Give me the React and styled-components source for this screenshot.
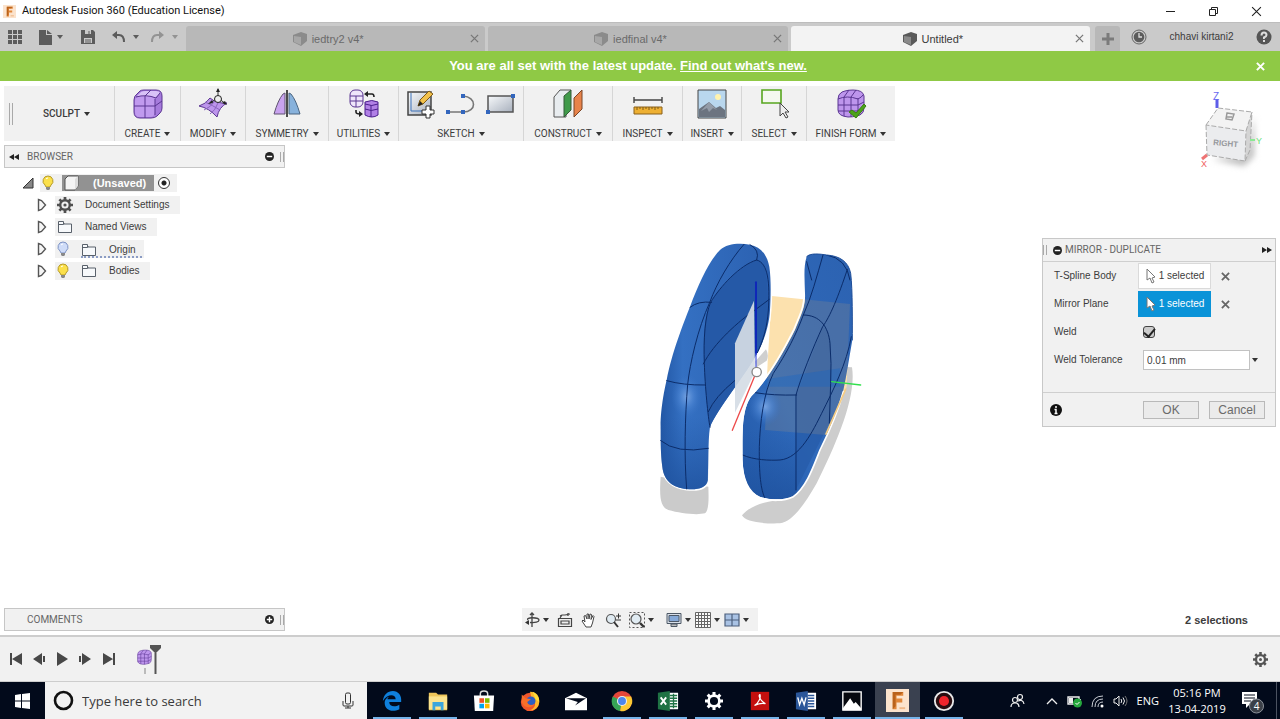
import React from "react";
import styled, { createGlobalStyle } from "styled-components";

const sans = '"Liberation Sans", Arial, sans-serif';
const narrow = 'Roboto, "Liberation Sans", sans-serif';
const system = '"Open Sans", "Noto Sans", sans-serif';

const GlobalStyle = createGlobalStyle`
  * { box-sizing: border-box; }
  body { margin: 0; background: #fff; color: #3c3c3c; font: 10px/14px ${sans}; }
  button, input { font: inherit; color: inherit; margin: 0; }
  svg { display: block; flex: none; }
`;

const Page = styled.div`
  display: flex;
  flex-direction: column;
  min-height: 100vh;
`;

const PlainButton = styled.button`
  display: flex;
  align-items: center;
  justify-content: center;
  padding: 0;
  border: 0;
  background: none;
`;

const Caret = styled.span`
  flex: none;
  width: 0;
  height: 0;
  border: 3px solid transparent;
  border-top: 4px solid ${(p) => p.$color || "#333"};
  border-bottom: 0;
`;

/* ---------- title bar ---------- */
const TitleBar = styled.header`
  display: flex;
  align-items: center;
  height: 22px;
  padding: 0 5px 0 3px;
  gap: 6px;
  font: 11px/16px ${narrow};
  color: #111;
`;
const AppTitle = styled.h1`
  flex: 1;
  margin: 0;
  font: inherit;
`;
const WindowButton = styled(PlainButton)`
  width: 37px;
  height: 22px;
`;

/* ---------- document tabs ---------- */
const TabBar = styled.div`
  display: flex;
  align-items: flex-end;
  height: 29px;
  background: #cacaca;
  border-top: 1px solid #bdbdbd;
`;
const QuickTools = styled.div`
  display: grid;
  grid-template-columns: 31px 42px 31px 39px 1fr;
  align-items: center;
  justify-items: start;
  align-self: stretch;
  width: 186px;
  padding-left: 8px;
`;
const QuickButton = styled(PlainButton)`
  gap: ${(p) => p.$gap || 0}px;
`;
const Tabs = styled.nav`
  display: flex;
  flex: 1;
  gap: 3px;
`;
const Tab = styled.div`
  display: flex;
  align-items: center;
  flex: 1;
  height: 25px;
  padding: 0 6px;
  border-radius: 3px 3px 0 0;
  background: ${(p) => (p.$active ? "#f3f3f3" : "#b8b8b8")};
  color: ${(p) => (p.$active ? "#3a3a3a" : "#6a6a6a")};
  font-size: 11px;
`;
const TabName = styled(PlainButton)`
  flex: 1;
  gap: 4px;
  padding-right: 7px;
`;
const NewTab = styled(PlainButton)`
  width: 25px;
  height: 25px;
  margin-left: 5px;
  background: #b8b8b8;
  border-radius: 3px 3px 0 0;
`;
const Account = styled.div`
  display: flex;
  align-items: center;
  justify-content: space-between;
  align-self: stretch;
  width: 160px;
  padding: 0 8px 0 11px;
`;

/* ---------- banner ---------- */
const Banner = styled.div`
  display: flex;
  align-items: center;
  height: 30px;
  padding: 0 15px 0 24px;
  background: #8fc945;
  color: #fff;
  font: bold 13px/16px ${sans};
`;
const BannerText = styled.p`
  flex: 1;
  margin: 0;
  padding-right: 24px;
  text-align: center;
`;
const BannerLink = styled.a`
  color: inherit;
`;

/* ---------- workspace ---------- */
const Workspace = styled.main`
  position: relative;
  display: flex;
  flex-direction: column;
  justify-content: space-between;
  flex: 1;
  padding: 5px 4px 4px;
`;
const Canvas = styled.svg`
  position: absolute;
  inset: 0;
  width: 100%;
  height: 100%;
`;
const Upper = styled.div`
  position: relative;
  display: flex;
  justify-content: space-between;
  align-items: flex-start;
`;
const LeftSide = styled.div`
  display: flex;
  flex-direction: column;
  align-items: flex-start;
  gap: 4px;
`;
const RightSide = styled.div`
  display: flex;
  flex-direction: column;
  align-items: flex-end;
  gap: 60px;
`;
const Ribbon = styled.div`
  display: flex;
  height: 55px;
  background: #f1f1f1;
  font: 10px/14px ${narrow};
`;
const Grip = styled.span`
  width: 4px;
  height: ${(p) => p.$h}px;
  border: solid #a9a9a9;
  border-width: 0 1px;
`;
const ModeCell = styled.div`
  display: flex;
  align-items: center;
  gap: 30px;
  width: 110px;
  padding-left: 5px;
`;
const MenuLabel = styled(PlainButton)`
  gap: 4px;
  font-weight: ${(p) => (p.$strong ? 500 : 400)};
  white-space: nowrap;
`;
const RibbonGroup = styled.section`
  display: flex;
  flex-direction: column;
  align-items: center;
  gap: 7px;
  width: ${(p) => p.$w}px;
  padding-top: 2px;
  border-left: 1px solid #d6d6d6;
`;
const IconRow = styled.div`
  display: flex;
  gap: 8px;
`;

/* ---------- browser / comments panels ---------- */
const PanelBar = styled.div`
  display: flex;
  align-items: center;
  width: 281px;
  height: 23px;
  padding: 0 0 0 4px;
  gap: 6px;
  border: 1px solid #c6c6c6;
  background: #f1f1f1;
  color: #666;
  font: 10px/14px ${narrow};
`;
const PanelTitle = styled.h2`
  flex: 1;
  margin: 0;
  padding-left: ${(p) => p.$indent || 0}px;
  font: inherit;
`;
const BrowserPanel = styled.section`
  display: flex;
  flex-direction: column;
  gap: 6px;
`;
const Tree = styled.ul`
  display: flex;
  flex-direction: column;
  gap: 4px;
  margin: 0;
  padding: 0 0 0 14px;
  list-style: none;
`;
const TreeRow = styled.li`
  display: flex;
  align-items: center;
  height: 18px;
  gap: ${(p) => (p.$root ? 4 : 8)}px;
  padding-left: ${(p) => (p.$root ? 0 : 19)}px;
`;
const TreeItem = styled.div`
  display: flex;
  align-items: center;
  height: 18px;
  gap: ${(p) => p.$gap || 12}px;
  padding: 0 ${(p) => p.$end || 10}px 0 2px;
  background: #f1f1f1;
`;
const RootName = styled.span`
  display: flex;
  align-items: center;
  height: 16px;
  gap: 14px;
  margin-left: 4px;
  padding: 0 8px 0 2px;
  background: #929292;
  color: #fff;
  font-size: 11px;
  font-weight: bold;
`;
const OriginName = styled.span`
  display: flex;
  align-items: center;
  gap: 12px;
  height: 18px;
  padding: 3px 6px 0 0;
  border-bottom: 2px dotted #8b9cc4;
`;
const ActiveRadio = styled.input`
  appearance: none;
  width: 12px;
  height: 12px;
  border: 1px solid #333;
  border-radius: 50%;
  background: radial-gradient(circle, #222 0 2px, #fff 3px);
`;

/* ---------- mirror dialog ---------- */
const Dialog = styled.form`
  width: 234px;
  border: 1px solid #c8c8c8;
  background: #f1f1f1;
`;
const DialogHead = styled.div`
  display: flex;
  align-items: center;
  gap: 3px;
  height: 23px;
  padding-right: 3px;
  border-bottom: 1px solid #cfcfcf;
  color: #666;
  font: 10px/14px ${narrow};
`;
const HeadIcon = styled.span`
  padding-left: 3px;
`;
const Fields = styled.div`
  display: grid;
  grid-template-columns: 84px 1fr;
  grid-auto-rows: 28px;
  align-items: center;
  padding: 0 14px 18px 11px;
`;
const Field = styled.div`
  display: flex;
  align-items: center;
  gap: ${(p) => p.$gap || 10}px;
  padding-left: ${(p) => p.$indent || 0}px;
`;
const PickButton = styled(PlainButton)`
  width: 73px;
  height: 26px;
  gap: 3px;
  border: 1px solid ${(p) => (p.$active ? "#0a93d8" : "#dadada")};
  background: ${(p) => (p.$active ? "#0a93d8" : "#fff")};
  color: ${(p) => (p.$active ? "#fff" : "#3c3c3c")};
`;
const Tick = styled.input`
  appearance: none;
  width: 12px;
  height: 12px;
  border: 1px solid #444;
  border-radius: 3px;
  background: #ccc;
  display: grid;
  place-items: center;
  &:checked::after {
    content: "";
    width: 5px;
    height: 9px;
    border: solid #222;
    border-width: 0 2px 2px 0;
    transform: translateY(-1px) rotate(40deg);
  }
`;
const ValueInput = styled.input`
  width: 107px;
  height: 20px;
  padding: 0 3px;
  border: 1px solid #c2c2c2;
  background: #fff;
`;
const DialogFoot = styled.div`
  display: flex;
  align-items: center;
  gap: 10px;
  height: 34px;
  padding: 0 10px 0 7px;
  border-top: 1px solid #cfcfcf;
`;
const FootButton = styled.button`
  width: 56px;
  height: 18px;
  padding: 0;
  border: 1px solid #b9b9b9;
  background: #ebebeb;
  color: #6a6a6a;
  font-size: 12px;
  line-height: 14px;
`;
const Spacer = styled.span`
  flex: 1;
`;

/* ---------- lower bar of the workspace ---------- */
const Lower = styled.div`
  position: relative;
  display: grid;
  grid-template-columns: 1fr auto 1fr;
  align-items: center;
`;
const ViewTools = styled.div`
  display: flex;
  align-items: center;
  height: 23px;
  padding: 0 9px 0 2px;
  gap: 8px;
  background: #f1f1f1;
`;
const ViewButton = styled(PlainButton)`
  gap: 3px;
`;
const Selections = styled.p`
  margin: 0;
  padding-right: 28px;
  text-align: right;
  font: bold 11px/14px ${sans};
`;

/* ---------- timeline ---------- */
const Timeline = styled.section`
  display: flex;
  align-items: center;
  height: 47px;
  padding: 0 12px 0 8px;
  border-top: 2px solid #cdcdcd;
  border-bottom: 1px solid #cdcdcd;
  background: #f1f1f1;
`;
const Player = styled.div`
  display: flex;
  gap: 7px;
  margin-right: 20px;
`;

/* ---------- taskbar ---------- */
const Taskbar = styled.footer`
  display: flex;
  height: 37px;
  background: #020a1b;
  color: #fff;
  font: 11px/16px ${system};
`;
const Start = styled(PlainButton)`
  width: 45px;
`;
const Search = styled.label`
  display: flex;
  align-items: center;
  gap: 8px;
  width: 322px;
  padding: 0 13px 0 8px;
  background: #f2f2f2;
`;
const SearchInput = styled.input`
  flex: 1;
  min-width: 0;
  padding: 0;
  border: 0;
  background: none;
  font: 13px/18px ${system};
  &::placeholder { color: #3a3a3a; opacity: 1; }
`;
const Apps = styled.div`
  display: flex;
  gap: 1px;
  padding-left: 2px;
`;
const AppButton = styled(PlainButton)`
  width: 45px;
  background: ${(p) => (p.$active ? "#3a4150" : "none")};
  padding-top: 2px;
  flex-direction: column;
  justify-content: space-between;
  &::after {
    content: "";
    width: ${(p) => (p.$active ? 45 : 38)}px;
    height: 2px;
    background: ${(p) => (p.$running ? "#76b4ea" : "transparent")};
  }
`;
const AppSlot = styled.span`
  display: flex;
  flex: 1;
  align-items: center;
`;
const Tray = styled.div`
  display: flex;
  align-items: center;
  justify-content: flex-end;
  flex: 1;
  padding-right: 3px;
`;
const TrayIcons = styled.div`
  display: flex;
  align-items: center;
  gap: 9px;
  margin-right: 8px;
`;
const Clock = styled.time`
  width: 58px;
  margin-left: 9px;
  text-align: center;
`;
const Notices = styled(PlainButton)`
  width: 46px;
  margin-left: 4px;
`;
const DesktopEdge = styled.span`
  align-self: stretch;
  width: 1px;
  background: #4b5260;
`;

/* ---------- drawings ---------- */
const FusionLogo = ({ size }) => (
  <svg width={size} height={size} viewBox="0 0 24 24">
    <path d="M0 0h24v24H0z" fill="#fbe3cd" />
    <path d="M7 3h11v4h-7v3h6v4h-6v7H7z" fill="#e0873a" />
    <path d="M7 3h11l-3 3h-5v12l-3 3z" fill="#b9621b" />
    <path d="M14 20h6" stroke="#f0b888" strokeWidth="2" />
  </svg>
);
const Cross = ({ size = 9, color = "#666", w = 1.4 }) => (
  <svg width={size} height={size} viewBox="0 0 10 10" stroke={color} strokeWidth={w}>
    <path d="M1 1l8 8M9 1l-8 8" />
  </svg>
);
const DocCube = ({ color, light }) => (
  <svg width="16" height="16" viewBox="0 0 16 16">
    <path d="M1 4l8-3 6 2v7l-6 5-8-4z" fill={color} />
    <path d="M2 5l7 1v8l-7-3z" fill={light} />
  </svg>
);
const Disc = ({ kind }) => (
  <svg width="9" height="9" viewBox="0 0 10 10">
    <circle cx="5" cy="5" r="5" fill="#222" />
    <path d={kind === "plus" ? "M2 5h6M5 2v6" : "M2 5h6"} stroke="#fff" strokeWidth="1.6" />
  </svg>
);
const DoubleArrow = ({ flip }) => (
  <svg width="10" height="8" viewBox="0 0 10 8">
    <path d={flip ? "M0 1l5 3-5 3zM5 1l5 3-5 3z" : "M10 1L5 4l5 3zM5 1L0 4l5 3z"} fill="#222" />
  </svg>
);
const Cursor = ({ fill = "#fff" }) => (
  <svg width="11" height="16" viewBox="0 0 11 16">
    <path d="M2 1v11l3-2 2 5 2-1-2-4 3-1z" fill={fill} stroke="#777" />
  </svg>
);
const Gear = ({ size, color, inner }) => (
  <svg width={size} height={size} viewBox="0 0 20 20">
    <g stroke={color} fill="none">
      <path d="M10 0v20M0 10h20M3 3l14 14M17 3L3 17" strokeWidth="3.4" />
      <circle cx="10" cy="10" r="6" strokeWidth="3" fill={inner} />
    </g>
    {size < 18 && <circle cx="10" cy="10" r="2" fill={color} />}
  </svg>
);

const SculptCube = () => (
  <g>
    <path d="M2 12q0-4 3-6l3-3q1-1 4-1h12q6 0 6 6v12q0 3-2 5l-3 3q-2 2-6 2H8q-6 0-6-6z" fill="#a67bdc" stroke="#5b3692" />
    <path d="M3 13q0-5 5-5h10q5 0 5 5v10q0 6-5 6H8q-5 0-5-5z" fill="#c09aee" />
    <path d="M5 8l4-4q2-1 4-1h11q3 0 4 2l-5 5q-2-2-5-2H8z" fill="#d8c2f7" />
    <path d="M13 30V8l6-6M2 18h21l7-5M4 9q10-3 20 1l4-5M23 11v16" stroke="#5b3692" fill="none" />
  </g>
);
const SmallSculpt = () => (
  <g>
    <path d="M3 11q0-5 4-7l3-1q3-1 8-1 10 0 11 6v12q0 5-4 7l-4 1q-3 1-8 1Q3 28 3 22z" fill="#bd95ec" stroke="#5b3692" />
    <path d="M3 11q9-4 20 0 4-2 5-4M3 17h20l6-3M3 23h19l6-3M9 9v19M16 9v20M23 10v18M9 9l5-7M16 9l5-7" stroke="#5b3692" fill="none" />
  </g>
);

const ribbonIcons = {
  create: <SculptCube />,
  modify: (
    <g>
      <path d="M2 18q7-2 11-8 7 6 17 5-8 4-10 14-8-9-18-11z" fill="#bd95ec" stroke="#5b3692" />
      <path d="M7 22q7-3 11-9M13 26q5-3 8-11M8 14q7 3 15 8" stroke="#8a64bd" fill="none" />
      <path d="M21 1v13M13 15l8-5 8 6" stroke="#333" fill="none" />
      <circle cx="21" cy="11" r="3.5" fill="#eee" stroke="#222" />
      <path d="M19 4l2-4 2 4zM15 12l-4 4 5-1zM28 13l2 4-5-2z" fill="#222" />
    </g>
  ),
  symmetry: (
    <g>
      <path d="M14 5v21H3Q7 12 12 6z" fill="#c9a3ef" stroke="#5e5370" />
      <path d="M18 5v21h11Q25 12 20 6z" fill="#88b2dc" stroke="#4b6580" />
      <path d="M16 2v27" stroke="#222" strokeWidth="1.6" />
    </g>
  ),
  utilities: (
    <g>
      <rect x="2" y="2" width="13" height="17" rx="5" fill="#efe6fb" stroke="#5b3692" />
      <path d="M2 8h13M2 13h13M8 8v11" stroke="#5b3692" />
      <path d="M17 14q7-3 13 0v13q-6 4-13 0z" fill="#b180e6" stroke="#4b1f8c" />
      <path d="M17 16q7 3 13 0M17 21q6 3 13 0M23 17v12" stroke="#4b1f8c" fill="none" />
      <path d="M19 6h5q2 0 2 3M8 22v2q0 2 4 2" stroke="#222" fill="none" strokeWidth="1.6" />
      <path d="M20 3v6l-4-3zM11 23v6l4-3z" fill="#222" />
    </g>
  ),
  sketch: (
    <g>
      <path d="M3 4h23v23H3z" fill="url(#steel)" stroke="#444" strokeWidth="1.500" />
      <path d="M6 5v18h17" stroke="#3b70b9" fill="none" />
      <path d="M13 18l2-6L24 3l4 3-10 10z" fill="#f2c14b" stroke="#7d5a17" />
      <path d="M13 18l2-5 3 3z" fill="#222" />
      <path d="M21 18h4v4h4v4h-4v4h-4v-4h-4v-4h4z" fill="#fff" stroke="#333" />
    </g>
  ),
  arc: (
    <g>
      <path d="M3 24h15M18 8c14 1 14 16 0 16" stroke="#777" strokeWidth="1.600" fill="none" />
      <path d="M1 22h4v4H1zM16 22h4v4h-4zM16 6h4v4h-4z" fill="#3366bd" />
    </g>
  ),
  rect: (
    <g>
      <path d="M3 8h25v16H3z" fill="url(#steel)" stroke="#555" strokeWidth="1.500" />
      <path d="M1 22h4v4H1zM26 6h4v4h-4z" fill="#3366bd" />
    </g>
  ),
  construct: (
    <g>
      <path d="M2 9l6-7h11l-5 6v21H2z" fill="#e8ecef" stroke="#555" />
      <path d="M12 8l7-6v20l-7 7z" fill="#3f9a4a" stroke="#355b38" />
      <path d="M22 10l8-8v19l-8 8z" fill="#e8834a" stroke="#7b4526" />
    </g>
  ),
  inspect: (
    <g>
      <path d="M2 12h28M2 9v6M30 9v6" stroke="#444" strokeWidth="1.4" />
      <path d="M2 19h28v7H2z" fill="#eeb032" stroke="#8a611b" />
      <path d="M5 19v3M8 19v2M11 19v3M14 19v2M17 19v3M20 19v2M23 19v3M26 19v2" stroke="#7d5a17" />
    </g>
  ),
  insert: (
    <g>
      <path d="M2 2h28v28H2z" fill="#b9d7ee" stroke="#444" />
      <circle cx="22" cy="9" r="3" fill="#fff3ae" />
      <path d="M3 21l10-7 7 6 4-2 5 4v7H3z" fill="#6c7480" />
      <path d="M13 14l-8 9 6-3 2 4 4-4 4 2z" fill="#949ca8" />
    </g>
  ),
  select: (
    <g>
      <path d="M4 2h19v13H4z" fill="#f4f8ef" stroke="#57a51f" strokeWidth="1.600" />
      <path d="M22 15v13l3-3 3 5 2-1-3-5h4z" fill="#eee" stroke="#444" />
    </g>
  ),
  finish: (
    <g>
      <SmallSculpt />
      <path d="M14 24l3-2 4 3 8-9 2 2-10 12z" fill="#4da31b" stroke="#39820f" />
    </g>
  ),
};
const RibbonIcon = ({ name }) => (
  <svg width="32" height="32" viewBox="0 0 32 32">{ribbonIcons[name]}</svg>
);

const groups = [
  ["CREATE", 66, ["create"]],
  ["MODIFY", 65, ["modify"]],
  ["SYMMETRY", 83, ["symmetry"]],
  ["UTILITIES", 70, ["utilities"]],
  ["SKETCH", 125, ["sketch", "arc", "rect"]],
  ["CONSTRUCT", 89, ["construct"]],
  ["INSPECT", 70, ["inspect"]],
  ["INSERT", 59, ["insert"]],
  ["SELECT", 65, ["select"]],
  ["FINISH FORM", 89, ["finish"]],
];

const Bulb = ({ fill, line }) => (
  <svg width="12" height="16" viewBox="0 0 12 16">
    <path d="M6 1a5 5 0 0 1 3 9l-1 2H4l-1-2a5 5 0 0 1 3-9z" fill={fill} stroke={line} />
    <path d="M4 12h4v2l-1 1H5l-1-1z" fill="#888" />
    <path d="M4 4q1-1 2-1" stroke="#fff" fill="none" />
  </svg>
);
const Folder = () => (
  <svg width="16" height="14" viewBox="0 0 16 14" fill="#f7f9fb" stroke="#59616b">
    <path d="M1.500 12.500v-11h5v2.500h8v8.500z" />
    <path d="M1.500 4.500h5l1-1" fill="none" />
  </svg>
);
const Twisty = () => (
  <svg width="10" height="14" viewBox="0 0 10 14">
    <path d="M1.500 1.500v11l3-1 4-4.500-4-4.500z" fill="#f5f5f5" stroke="#555" strokeWidth="1.400" />
  </svg>
);

const viewIcons = {
  orbit: (
    <g fill="none" stroke="#444" strokeWidth="1.300">
      <path d="M8 1v14M6 3l2-2 2 2" />
      <path d="M4 8C1 5 15 5 15 8c0 2-4 3-9 2.500" />
      <path d="M5 8l-4 2.500 4 2.500z" fill="#333" stroke="none" />
    </g>
  ),
  look: (
    <g fill="#eee" stroke="#444" strokeWidth="1.200">
      <path d="M1.500 6.500h13v8h-13zM4 9h8v3H4z" />
      <path d="M3 6l2-3h3l5-1M5 3l-2 1M11 1v3" fill="none" />
    </g>
  ),
  hand: (
    <path
      d="M5 15l-4-6 1-1 2 2-1-6 1.500-.5L6 7 6 2h1.500L8 7l1-5 1.500.5-.5 5 2-4 1 1-1.500 6.500-1.500 4z"
      fill="#fff"
      stroke="#444"
    />
  ),
  zoom: (
    <g fill="none" stroke="#555">
      <circle cx="6" cy="7" r="4.500" fill="#e0ebf2" strokeWidth="1.200" />
      <path d="M9 10l4 5" stroke="#333" strokeWidth="2" />
      <path d="M11 4h5M13.500 1.500v5M11 8h5" stroke="#333" />
    </g>
  ),
  fit: (
    <g fill="none" stroke="#555">
      <path d="M.5.500h15v15H.500z" strokeDasharray="2 2" />
      <circle cx="7" cy="7" r="5" fill="#e0ebf2" strokeWidth="1.200" />
      <path d="M11 11l4 4" stroke="#333" strokeWidth="2.400" />
    </g>
  ),
  display: (
    <g stroke="#4d5866">
      <path d="M1 1.500h14v10H1z" fill="#d7dee8" />
      <path d="M3 3.500h10v6H3z" fill="#86a9d8" />
      <path d="M5 12h6v2.500H5z" fill="#bbb" />
    </g>
  ),
  grid: (
    <path
      d="M.5.500h15v15H.500zM.5 3.500h15M.5 6.500h15M.5 9.500h15M.5 12.500h15M3.500.500v15M6.500.500v15M9.500.500v15M12.500.500v15"
      fill="#fafafa"
      stroke="#666"
    />
  ),
  layout: (
    <g fill="#a9c2e4" stroke="#4d5f7c" strokeWidth="1.200">
      <path d="M1 2h14v12H1zM8 2v12M1 8h14" />
    </g>
  ),
};
const viewTools = [
  ["orbit", "Orbit", true],
  ["look", "Look At", false],
  ["hand", "Pan", false],
  ["zoom", "Zoom", false],
  ["fit", "Fit", true],
  ["display", "Display Settings", true],
  ["grid", "Grid and Snaps", true],
  ["layout", "Viewports", true],
];
const ViewGroup = styled.div`
  display: flex;
  gap: ${(p) => p.$gap}px;
  margin-right: ${(p) => p.$after || 0}px;
`;
const ViewTool = ({ tool: [icon, label, menu] }) => (
  <ViewButton aria-label={label}>
    <svg width="16" height="16" viewBox="0 0 16 16">{viewIcons[icon]}</svg>
    {menu && <Caret />}
  </ViewButton>
);

const playerShapes = [
  ["First", "M2 2h2v12H2zM14 2v12L4 8z"],
  ["Back", "M11 2v12L2 8zM12 5h2v6h-2z"],
  ["Play", "M3 1l11 7-11 7z"],
  ["Forward", "M5 2v12l9-6zM2 5h2v6H2z"],
  ["Last", "M3 2v12l10-6zM13 2h2v12h-2z"],
];

const Scene = () => (
  <Canvas viewBox="0 0 1280 554" aria-label="Two mirrored bodies">
    <defs>
      <linearGradient id="steel" x1="0" y1="0" x2="1" y2="1">
        <stop offset="0" stopColor="#f7f9fb" />
        <stop offset="1" stopColor="#a8b0bd" />
      </linearGradient>
      <linearGradient id="leftSkin" x1="0" x2="1">
        <stop offset="0" stopColor="#2257a5" />
        <stop offset=".2" stopColor="#3470c2" />
        <stop offset="1" stopColor="#2b60b0" />
      </linearGradient>
      <linearGradient id="rightSkin" x1="0" y1="1" x2="1" y2="0">
        <stop offset="0" stopColor="#2157a6" />
        <stop offset=".4" stopColor="#2f69ba" />
        <stop offset="1" stopColor="#2c62b1" />
      </linearGradient>
      <linearGradient id="foot" x1="0" y1="0" x2="0" y2="1">
        <stop offset="0" stopColor="#2157a6" stopOpacity="0" />
        <stop offset="1" stopColor="#1f529e" stopOpacity=".8" />
      </linearGradient>
      <radialGradient id="shine">
        <stop offset="0" stopColor="#76a3e2" />
        <stop offset=".5" stopColor="#4d86d4" stopOpacity=".6" />
        <stop offset="1" stopColor="#3973c4" stopOpacity="0" />
      </radialGradient>
      <clipPath id="rightClip">
        <path d="M500 80C510 68 540 72 560 75C600 78 625 95 632 130C638 180 637 280 637 330C625 400 617 450 610 480C590 560 560 620 540 660C520 710 500 770 460 798C430 812 390 810 360 800C325 785 310 750 308 690C307 640 307 590 312 560C318 520 330 500 345 488C390 440 440 350 465 300C485 250 497 230 495 190C494 150 490 110 500 80Z" />
      </clipPath>
    </defs>
    <g transform="translate(640 149) scale(.333333)" fill="none" strokeLinecap="round">
      <path d="M62 740C58 800 60 830 85 840C120 850 170 856 195 850C208 840 206 800 205 770Z" fill="#cbcbcb" />
      <path d="M306 856C315 876 370 882 420 880C455 875 490 830 530 760C590 640 650 500 636 412L600 410L520 690L440 806C400 812 340 816 306 856Z" fill="#cdcdcd" />
      <path d="M395 198L630 222L620 470L558 615L375 600L383 395Z" fill="#fce1ae" />
      <path d="M345 395L378 358Q388 375 380 392L350 412Z" fill="#cfcfcf" />
      <path d="M62 600C60 540 75 470 80 450C95 370 130 280 150 230C175 165 205 95 240 60C260 40 300 38 330 44C360 50 380 70 388 110C394 150 392 210 390 240C388 280 375 330 350 372C320 430 230 540 210 590C203 640 206 700 203 750C200 775 170 780 140 777C100 772 72 755 67 710C62 670 62 640 62 600Z" fill="url(#leftSkin)" stroke="#fff" strokeWidth="9" paintOrder="stroke" />
      <path d="M350 90C300 110 240 170 215 215C190 255 190 330 193 400C195 470 204 560 210 592C230 540 320 430 350 372C375 330 386 280 383 180C380 120 372 95 350 90Z" fill="#2559a7" />
      <path d="M62 560H207L204 750C200 775 170 780 140 777C100 772 72 755 67 710C62 670 62 640 62 560Z" fill="url(#foot)" />
      <ellipse cx="140" cy="500" rx="46" ry="66" fill="url(#shine)" />
      <g stroke="#0b2c69" strokeWidth="3">
        <path d="M312 43C270 90 230 160 210 215C172 300 150 400 143 463C135 560 132 680 140 777" />
        <path d="M330 44Q360 60 350 90C300 105 240 170 212 217C195 255 190 330 193 400C195 470 204 560 210 592" />
        <path d="M350 90C385 98 390 160 385 240C382 290 370 330 352 368" />
        <path d="M150 232Q175 212 215 217M80 452Q130 466 195 465M62 632Q110 672 205 655" />
        <path d="M190 402C220 340 300 270 345 240L388 208M205 545Q225 500 284 452" />
      </g>
      <path d="M285 340L342 212L345 425L285 548Z" fill="#d5dce5" fillOpacity=".92" />
      <path d="M348 157V372" stroke="#1028b8" strokeWidth="6" />
      <path d="M348 372V412" stroke="#5563df" strokeWidth="4" />
      <path d="M345 436L277 601" stroke="#ed4b4b" strokeWidth="4" />
      <g clipPath="url(#rightClip)">
        <path d="M290 60H650V820H290Z" fill="url(#rightSkin)" />
        <path d="M470 495L548 290Q570 300 572 340V570L470 775Z" fill="#2458a5" opacity=".6" />
        <path d="M395 198L630 222L620 470L558 615L375 600Z" fill="#b39a78" opacity=".2" />
        <path d="M300 600H470V820H300Z" fill="url(#foot)" />
        <ellipse cx="375" cy="530" rx="50" ry="58" fill="url(#shine)" />
        <path d="M360 450L600 415V470H380Z" fill="#1464c6" opacity=".35" />
        <g stroke="#0b2c69" strokeWidth="3">
          <path d="M549 75C530 140 515 200 490 255C470 310 440 370 400 430C370 490 360 580 358 650C357 730 362 780 375 805" />
          <path d="M490 255C540 255 565 290 570 340Q575 400 572 460L568 580" />
          <path d="M622 118C595 200 570 260 548 290C520 350 480 450 468 495V780" />
          <path d="M345 488Q400 497 470 495M308 675C340 690 390 692 420 690C480 685 520 600 545 550C580 480 620 400 634 320" />
          <path d="M500 95L515 150M560 75Q620 85 630 150" />
        </g>
      </g>
      <path d="M500 80C510 68 540 72 560 75C600 78 625 95 632 130C638 180 637 280 637 330" stroke="#1c4c98" strokeWidth="3" />
      <path d="M610 485C590 560 560 620 540 660C520 710 500 770 460 800C430 815 390 813 360 803C325 788 308 750 305 690C304 640 304 590 309 560C315 520 327 500 342 486C387 438 437 348 462 298C482 248 494 228 492 190" stroke="#fff" strokeWidth="5" />
      <path d="M617 478L558 612" stroke="#f5cc84" strokeWidth="5" />
      <path d="M575 455L662 465" stroke="#32e04d" strokeWidth="4" />
      <circle cx="350" cy="426" r="14" fill="#fff" stroke="#888" strokeWidth="4" />
    </g>
  </Canvas>
);

const ViewCube = () => (
  <svg width="80" height="92" viewBox="1196 85 80 92" fontFamily="Liberation Sans, sans-serif" fontWeight="bold">
    <defs>
      <filter id="soft" x="-30%" y="-30%" width="160%" height="160%">
        <feGaussianBlur stdDeviation="3" />
      </filter>
    </defs>
    <path d="M1212 158l32 7 10-10v-40l-8 40z" fill="#bbb" filter="url(#soft)" />
    <path d="M1217 98v9" stroke="#5d5de8" strokeWidth="3" />
    <path d="M1206 124l12-17 34 4-6 20z" fill="#f3f3f3" />
    <path d="M1246 130l6-19-2 38-5 11z" fill="#d4d4d4" />
    <path d="M1206 124l40 6-1 30-38-6z" fill="#ebecee" />
    <path d="M1206 124l12-17 34 4-6 19zM1206 124l1 30 38 6 1-30M1245 160l5-11 2-38" fill="none" stroke="#aaa" strokeDasharray="5 2" />
    <text x="1213" y="144" fontSize="8" fill="#96989c" transform="rotate(5 1213 144)">RIGHT</text>
    <path d="M1227 112l7 1-2 6-6-1zM1227 116h5" stroke="#999" fill="none" strokeWidth="1.500" />
    <text x="1213" y="99" fontSize="10" fontWeight="400" fill="#6a6af0">Z</text>
    <path d="M1202 158l5-4" stroke="#ee7474" strokeWidth="3" />
    <text x="1201" y="166" fontSize="9" fontWeight="400" fill="#f06060">X</text>
    <path d="M1250 139h5" stroke="#8be894" strokeWidth="2" />
    <text x="1256" y="143" fontSize="9" fontWeight="400" fill="#6de37c">Y</text>
  </svg>
);

const appIcons = {
  Edge: (
    <path d="M2 12C3 5 7 1 13 1c6 0 9 5 9 9v3H9c0 5 6 6 11 3v5C12 25 4 22 4 14c0-4 3-6 5-7-1 1-2 2-2 3h9c0-5-8-7-14 2z" fill="#0f80dc" />
  ),
  Explorer: (
    <g>
      <path d="M2 3h8l2 2h10v17H2z" fill="#eec65b" />
      <path d="M2 7h20v14H2z" fill="#fbe38e" />
      <path d="M6 13h12v9h-3v-4H9v4H6z" fill="#3ba5dc" />
    </g>
  ),
  Store: (
    <g>
      <path d="M8 7V4q0-3 4-3t4 3v3" stroke="#ddd" strokeWidth="1.600" fill="none" />
      <path d="M1 6h22l-1 17H2z" fill="#fff" />
      <path d="M7 9h5v5H7z" fill="#ee5126" />
      <path d="M13 9h5v5h-5z" fill="#7fba00" />
      <path d="M7 15h5v5H7z" fill="#00a4ef" />
      <path d="M13 15h5v5h-5z" fill="#ffb900" />
    </g>
  ),
  Firefox: (
    <g>
      <circle cx="12" cy="13" r="10" fill="#f0562b" />
      <path d="M12 2c7 0 11 5 10 12-1 6-6 9-11 8 7-1 9-9 3-12z" fill="#ffb82b" />
      <path d="M15 2c4 2 7 6 7 11l-4-3z" fill="#ffde3b" />
      <circle cx="13" cy="12" r="5" fill="#2d5fc4" />
      <path d="M3 5l4 4 6 1-4 3c1 4 5 4 8 2-2 5-11 6-14-2z" fill="#f86f29" />
    </g>
  ),
  Mail: (
    <g>
      <path d="M0 9l12-6 12 6v13H0z" fill="#fff" />
      <path d="M1 9h22l-12 8 3-4z" fill="#020a1b" />
    </g>
  ),
  Chrome: (
    <g>
      <circle cx="12" cy="12" r="11" fill="#e4473a" />
      <path d="M12 12L2 7a11 11 0 0 0 8 16z" fill="#36a455" />
      <path d="M12 12h11a11 11 0 0 1-13 11z" fill="#fbc934" />
      <path d="M12 7h10q2 4 1 8H12z" fill="#fbc934" />
      <circle cx="12" cy="12" r="5.500" fill="#eee" />
      <circle cx="12" cy="12" r="4.300" fill="#4c86ed" />
    </g>
  ),
  Excel: (
    <g>
      <path d="M11 3h12v18H11z" fill="#fff" />
      <path d="M14 6h8M14 9h8M14 12h8M14 15h8M14 18h8M18 4v16" stroke="#207346" strokeWidth="1.400" />
      <path d="M1 3l13-2v22L1 21z" fill="#1f7244" />
      <path d="M4 8l6 8M10 8l-6 8" stroke="#fff" strokeWidth="2" />
    </g>
  ),
  Acrobat: (
    <g>
      <path d="M2 2h20v20H2z" fill="#c4100e" />
      <path d="M6 17c5-3 7-9 6-12-2 0-1 6 6 10-3-1-8 0-12 2z" stroke="#fff" strokeWidth="1.300" fill="none" />
    </g>
  ),
  Word: (
    <g>
      <path d="M11 3h12v18H11z" fill="#fff" />
      <path d="M14 6h7M14 9h7M14 12h7M14 15h7M14 18h7" stroke="#2a5699" strokeWidth="1.400" />
      <path d="M1 3l13-2v22L1 21z" fill="#2a5699" />
      <path d="M3 8l2 8 2.500-7L10 16l2-8" stroke="#fff" strokeWidth="1.500" fill="none" />
    </g>
  ),
  Photos: (
    <g>
      <path d="M2 2h20v20H2z" fill="#06080f" stroke="#fff" strokeWidth="1.500" />
      <path d="M2 20l8-11 4 6 2-2 6 7v2H2z" fill="#fff" />
    </g>
  ),
  Recorder: (
    <g>
      <circle cx="12" cy="12" r="10" fill="#2a0d10" stroke="#e8e8e8" strokeWidth="2" />
      <circle cx="12" cy="12" r="5.500" fill="#f0242b" />
    </g>
  ),
};
const apps = [
  ["Edge", true],
  ["Explorer", true],
  ["Store", false],
  ["Firefox", false],
  ["Mail", false],
  ["Chrome", true],
  ["Excel", true],
  ["Settings", true],
  ["Acrobat", true],
  ["Word", true],
  ["Photos", true],
  ["Fusion", true],
  ["Recorder", true],
];
const AppIcon = ({ name }) => {
  if (name === "Fusion") return <FusionLogo size={23} />;
  if (name === "Settings") return <Gear size={18} color="#fff" inner="#020a1b" />;
  return <svg width="22" height="22" viewBox="0 0 24 24">{appIcons[name]}</svg>;
};

const PeopleIcon = () => (
  <svg width="28" height="16" viewBox="0 0 28 16" fill="none" stroke="#eee" strokeWidth="1.200">
    <circle cx="5" cy="7" r="2.500" />
    <path d="M1 14q0-4 4-4t4 4" />
    <circle cx="10" cy="4" r="2.500" />
    <path d="M8 8q5-2 6 3" />
  </svg>
);

const WindowControls = () => (
  <>
    <WindowButton aria-label="Minimise">
      <svg width="11" height="11" viewBox="0 0 11 11"><path d="M1 5.500h9" stroke="#222" /></svg>
    </WindowButton>
    <WindowButton aria-label="Restore">
      <svg width="11" height="11" viewBox="0 0 11 11" fill="none" stroke="#222">
        <path d="M1.500 3.500h6v6h-6zM3.500 3V1.500h6v6H8" />
      </svg>
    </WindowButton>
    <WindowButton aria-label="Close"><Cross size={11} color="#222" w={1} /></WindowButton>
  </>
);

const documents = [["iedtry2 v4*"], ["iedfinal v4*"], ["Untitled*", true]];

export default function App() {
  return (
    <Page>
      <GlobalStyle />
      <TitleBar>
        <FusionLogo size={13} />
        <AppTitle>Autodesk Fusion 360 (Education License)</AppTitle>
        <WindowControls />
      </TitleBar>

      <TabBar>
        <QuickTools>
          <QuickButton aria-label="Data panel">
            <svg width="14" height="14" viewBox="0 0 14 14" fill="#5c5c5c">
              <path d="M0 0h4v4H0zM5 0h4v4H5zM10 0h4v4h-4zM0 5h4v4H0zM5 5h4v4H5zM10 5h4v4h-4zM0 10h4v4H0zM5 10h4v4H5zM10 10h4v4h-4z" />
            </svg>
          </QuickButton>
          <QuickButton aria-label="File" $gap={5}>
            <svg width="13" height="15" viewBox="0 0 13 15" fill="#5c5c5c">
              <path d="M0 0h7v5h6v10H0zM8 0l5 4H8z" />
            </svg>
            <Caret $color="#5c5c5c" />
          </QuickButton>
          <QuickButton aria-label="Save">
            <svg width="14" height="14" viewBox="0 0 14 14">
              <path d="M0 0h12l2 2v12H0z" fill="#5c5c5c" />
              <path d="M4 0h6v4H4zM3 8h8v5H3z" fill="#cacaca" />
              <path d="M8 1v3M4 10h6M4 12h6" stroke="#5c5c5c" />
            </svg>
          </QuickButton>
          <QuickButton aria-label="Undo" $gap={8}>
            <svg width="13" height="12" viewBox="0 0 13 12">
              <path d="M3 4h4q5 0 5 7" stroke="#5c5c5c" strokeWidth="2" fill="none" />
              <path d="M5 0v8L0 4z" fill="#5c5c5c" />
            </svg>
            <Caret $color="#5c5c5c" />
          </QuickButton>
          <QuickButton aria-label="Redo" $gap={8}>
            <svg width="13" height="12" viewBox="0 0 13 12">
              <path d="M10 4H6q-5 0-5 7" stroke="#939393" strokeWidth="2" fill="none" />
              <path d="M8 0v8l5-4z" fill="#939393" />
            </svg>
            <Caret $color="#939393" />
          </QuickButton>
        </QuickTools>
        <Tabs>
          {documents.map(([name, active]) => (
            <Tab key={name} $active={active}>
              <TabName>
                <DocCube color={active ? "#5a5a5a" : "#8b8b8b"} light={active ? "#8a8a8a" : "#a7a7a7"} />
                {name}
              </TabName>
              <PlainButton aria-label="Close document"><Cross color="#777" /></PlainButton>
            </Tab>
          ))}
        </Tabs>
        <NewTab aria-label="New document">
          <svg width="12" height="12" viewBox="0 0 12 12"><path d="M6 0v12M0 6h12" stroke="#7b7b7b" strokeWidth="3" /></svg>
        </NewTab>
        <Account>
          <PlainButton aria-label="Job status">
            <svg width="16" height="16" viewBox="0 0 16 16">
              <circle cx="8" cy="8" r="7" fill="none" stroke="#666" />
              <circle cx="8" cy="8" r="5.300" fill="#5c5c5c" />
              <path d="M8 4v4h3" stroke="#ddd" fill="none" strokeWidth="1.300" />
            </svg>
          </PlainButton>
          <PlainButton>chhavi kirtani2</PlainButton>
          <PlainButton aria-label="Help">
            <svg width="16" height="16" viewBox="0 0 16 16">
              <circle cx="8" cy="8" r="7.500" fill="#555" />
              <path d="M5.500 6.500q0-3 2.500-3t2.500 2.500q0 1.500-2.500 2.500v1.500M8 11v2" stroke="#ddd" strokeWidth="2" fill="none" />
            </svg>
          </PlainButton>
        </Account>
      </TabBar>

      <Banner>
        <BannerText>
          You are all set with the latest update. <BannerLink href="#new">Find out what's new.</BannerLink>
        </BannerText>
        <PlainButton aria-label="Dismiss"><Cross size={9} color="#fff" w={2.2} /></PlainButton>
      </Banner>

      <Workspace>
        <Scene />
        <Upper>
          <LeftSide>
            <Ribbon>
              <ModeCell>
                <Grip $h={22} />
                <MenuLabel $strong>SCULPT <Caret /></MenuLabel>
              </ModeCell>
              {groups.map(([label, w, icons]) => (
                <RibbonGroup key={label} $w={w}>
                  <IconRow>{icons.map((n) => <RibbonIcon key={n} name={n} />)}</IconRow>
                  <MenuLabel>{label} <Caret /></MenuLabel>
                </RibbonGroup>
              ))}
            </Ribbon>
            <BrowserPanel>
              <PanelBar>
                <DoubleArrow />
                <PanelTitle $indent={2}>BROWSER</PanelTitle>
                <Disc />
                <Grip $h={10} />
              </PanelBar>
              <Tree>
                <TreeRow $root>
                  <svg width="18" height="14" viewBox="0 0 18 14"><path d="M15 2v10H5z" fill="#888" stroke="#333" /></svg>
                  <TreeItem $gap={4} $end={7}>
                    <Bulb fill="#fbe04b" line="#b59a2b" />
                    <RootName>
                      <svg width="15" height="16" viewBox="0 0 15 16">
                        <path d="M1 4l3-3h10v10l-3 4H1z" fill="#f4f4f4" stroke="#555" />
                        <path d="M11 4l3-3v10l-3 4z" fill="#ddd" />
                      </svg>
                      (Unsaved)
                    </RootName>
                    <ActiveRadio type="radio" name="component" aria-label="Activate component" defaultChecked />
                  </TreeItem>
                </TreeRow>
                <TreeRow>
                  <Twisty />
                  <TreeItem><Gear size={16} color="#505050" inner="#f1f1f1" />Document Settings</TreeItem>
                </TreeRow>
                <TreeRow>
                  <Twisty />
                  <TreeItem><Folder />Named Views</TreeItem>
                </TreeRow>
                <TreeRow>
                  <Twisty />
                  <TreeItem $end={2}>
                    <Bulb fill="#cfdcf8" line="#7e93c4" />
                    <OriginName><Folder />Origin</OriginName>
                  </TreeItem>
                </TreeRow>
                <TreeRow>
                  <Twisty />
                  <TreeItem><Bulb fill="#fbe04b" line="#b59a2b" /><Folder />Bodies</TreeItem>
                </TreeRow>
              </Tree>
            </BrowserPanel>
          </LeftSide>

          <RightSide>
            <ViewCube />
            <Dialog onSubmit={(e) => e.preventDefault()}>
              <DialogHead>
                <Grip $h={10} />
                <HeadIcon><Disc /></HeadIcon>
                <PanelTitle>MIRROR - DUPLICATE</PanelTitle>
                <DoubleArrow flip />
              </DialogHead>
              <Fields>
                <label htmlFor="body">T-Spline Body</label>
                <Field>
                  <PickButton id="body" type="button"><Cursor />1 selected</PickButton>
                  <PlainButton type="button" aria-label="Clear body"><Cross w={2} /></PlainButton>
                </Field>
                <label htmlFor="plane">Mirror Plane</label>
                <Field>
                  <PickButton id="plane" type="button" $active><Cursor />1 selected</PickButton>
                  <PlainButton type="button" aria-label="Clear plane"><Cross w={2} /></PlainButton>
                </Field>
                <label htmlFor="weld">Weld</label>
                <Field $indent={5}><Tick id="weld" type="checkbox" defaultChecked /></Field>
                <label htmlFor="tolerance">Weld Tolerance</label>
                <Field $indent={5} $gap={2}>
                  <ValueInput id="tolerance" defaultValue="0.01 mm" />
                  <PlainButton type="button" aria-label="Tolerance options"><Caret /></PlainButton>
                </Field>
              </Fields>
              <DialogFoot>
                <svg width="12" height="12" viewBox="0 0 12 12">
                  <circle cx="6" cy="6" r="6" fill="#111" />
                  <path d="M6 2v2M4.500 5.500H6V9M4.500 9.500h3" stroke="#fff" strokeWidth="1.500" fill="none" />
                </svg>
                <Spacer />
                <FootButton type="submit">OK</FootButton>
                <FootButton type="button">Cancel</FootButton>
              </DialogFoot>
            </Dialog>
          </RightSide>
        </Upper>

        <Lower>
          <PanelBar>
            <PanelTitle $indent={18}>COMMENTS</PanelTitle>
            <Disc kind="plus" />
            <Grip $h={10} />
          </PanelBar>
          <ViewTools>
            <ViewGroup $gap={8} $after={4}>
              {viewTools.slice(0, 5).map((t) => <ViewTool key={t[0]} tool={t} />)}
            </ViewGroup>
            <ViewGroup $gap={4}>
              {viewTools.slice(5).map((t) => <ViewTool key={t[0]} tool={t} />)}
            </ViewGroup>
          </ViewTools>
          <Selections>2 selections</Selections>
        </Lower>
      </Workspace>

      <Timeline>
        <Player>
          {playerShapes.map(([label, d]) => (
            <PlainButton key={label} aria-label={label}>
              <svg width="16" height="16" viewBox="0 0 16 16"><path d={d} fill="#484848" /></svg>
            </PlainButton>
          ))}
        </Player>
        <svg width="26" height="32" viewBox="0 0 26 32">
          <g transform="translate(0 6) scale(.53)"><SmallSculpt /></g>
          <path d="M9 25v6" stroke="#bbb" strokeWidth="2" />
          <path d="M14 2h11v3l-4 4h-3l-4-4z" fill="#555" />
          <path d="M19.500 8v23" stroke="#555" strokeWidth="2" />
        </svg>
        <Spacer />
        <PlainButton aria-label="Timeline settings"><Gear size={15} color="#555" inner="#f1f1f1" /></PlainButton>
      </Timeline>

      <Taskbar>
        <Start aria-label="Start">
          <svg width="15" height="16" viewBox="0 0 15 16" fill="#fff">
            <path d="M0 2l6-1v6.500H0zM7 1l8-1v7.500H7zM0 8.500h6V15l-6-1zM7 8.500h8V16l-8-1z" />
          </svg>
        </Start>
        <Search>
          <svg width="21" height="21" viewBox="0 0 21 21"><circle cx="10.500" cy="10.500" r="8.500" fill="none" stroke="#111" strokeWidth="2.600" /></svg>
          <SearchInput placeholder="Type here to search" aria-label="Search" />
          <svg width="12" height="17" viewBox="0 0 12 17" fill="none" stroke="#333">
            <rect x="3.500" y="1" width="5" height="11" rx="1.500" />
            <path d="M1 9v4q0 1 1 1h8q1 0 1-1V9M6 14v2M3 16h6" />
          </svg>
        </Search>
        <Apps>
          {apps.map(([name, running]) => (
            <AppButton key={name} aria-label={name} $running={running} $active={name === "Fusion"}>
              <AppSlot><AppIcon name={name} /></AppSlot>
            </AppButton>
          ))}
        </Apps>
        <Tray>
          <TrayIcons>
            <PeopleIcon />
          </TrayIcons>
          <TrayIcons>
            <svg width="12" height="8" viewBox="0 0 12 8"><path d="M1 7l5-5 5 5" fill="none" stroke="#eee" strokeWidth="1.300" /></svg>
            <svg width="15" height="14" viewBox="0 0 15 14">
              <path d="M1 3h11v7H1z" fill="none" stroke="#eee" strokeWidth="1.400" />
              <path d="M2 4h4v5H2zM13 5h1v3h-1z" fill="#eee" />
              <circle cx="10.500" cy="9" r="4.500" fill="#25a83d" />
              <path d="M8.500 9l1.500 1.500L12.500 8" stroke="#fff" fill="none" />
            </svg>
            <svg width="13" height="14" viewBox="0 0 13 14" fill="none" stroke="#c8ccd3">
              <path d="M1 13Q1 2 12 2M4 13q0-8 8-8M7 13q0-5 5-5" />
              <circle cx="11" cy="12" r="1.500" fill="#fff" stroke="none" />
            </svg>
            <svg width="16" height="14" viewBox="0 0 16 14" fill="none" stroke="#eee">
              <path d="M1 5h2l3-3v10L3 9H1zM8 5q1.500 2 0 4M10 3.500q3 3.500 0 7" />
              <path d="M12 2q4 5 0 10" stroke="#777" />
            </svg>
          </TrayIcons>
          <span>ENG</span>
          <Clock>05:16 PM<br />13-04-2019</Clock>
          <Notices aria-label="Notifications">
            <svg width="24" height="26" viewBox="0 0 24 26">
              <path d="M1 4h15v12H9l-4 4v-4H1z" fill="#fff" />
              <path d="M3 7h11M3 10h11M3 13h7" stroke="#020a1b" />
              <circle cx="15.500" cy="18" r="7" fill="#3b4048" stroke="#8d929b" />
              <text x="15.500" y="22" fontSize="10" textAnchor="middle" fill="#fff">4</text>
            </svg>
          </Notices>
          <DesktopEdge />
        </Tray>
      </Taskbar>
    </Page>
  );
}
